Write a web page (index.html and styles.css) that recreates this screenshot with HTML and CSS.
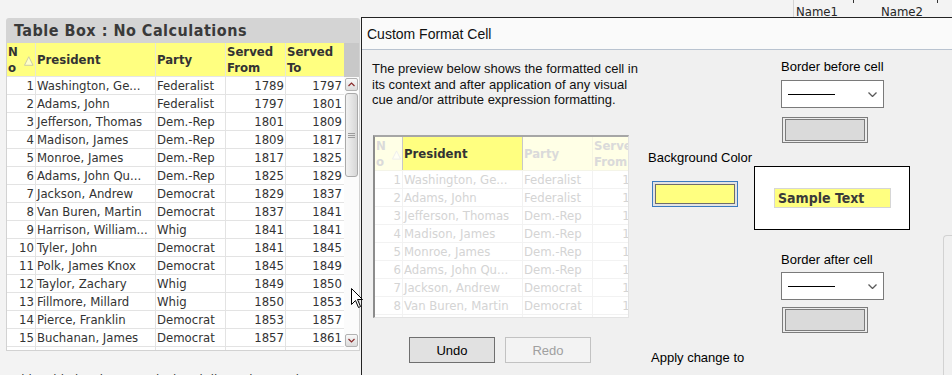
FILE: index.html
```html
<!DOCTYPE html>
<html lang="en">
<head>
    <meta charset="UTF-8">
    <meta name="viewport" content="width=device-width, initial-scale=1.0">
    <link rel="stylesheet" href="styles.css">
    <title>Custom Format Cell</title>
</head>
<body>
    <div class="top-strip">
        <div class="col-names">
            <span class="col-name first">Name1</span>
            <span class="col-name second">Name2</span>
        </div>
    </div>

    <div class="desk">
        <div class="left-side">
            <div class="table-box">
                <div class="tb-title">Table Box : No Calculations</div>
                <div class="tb-body">
                    <div class="grid">
                        <div class="row head">
                            <div class="cell no-head"><span class="no-text">No</span>
                                <svg class="sort" width="10" height="10" viewBox="0 0 10 10"><polygon points="5,0.5 9.5,9.5 0.5,9.5" fill="#ffffc8" stroke="#c9c9a8"/></svg>
                            </div>
                            <div class="cell">President</div>
                            <div class="cell">Party</div>
                            <div class="cell">Served From</div>
                            <div class="cell">Served To</div>
                        </div>
                        <div class="row"><div class="cell num">1</div><div class="cell">Washington, Ge...</div><div class="cell">Federalist</div><div class="cell num">1789</div><div class="cell num">1797</div></div>
                        <div class="row"><div class="cell num">2</div><div class="cell">Adams, John</div><div class="cell">Federalist</div><div class="cell num">1797</div><div class="cell num">1801</div></div>
                        <div class="row"><div class="cell num">3</div><div class="cell">Jefferson, Thomas</div><div class="cell">Dem.-Rep</div><div class="cell num">1801</div><div class="cell num">1809</div></div>
                        <div class="row"><div class="cell num">4</div><div class="cell">Madison, James</div><div class="cell">Dem.-Rep</div><div class="cell num">1809</div><div class="cell num">1817</div></div>
                        <div class="row"><div class="cell num">5</div><div class="cell">Monroe, James</div><div class="cell">Dem.-Rep</div><div class="cell num">1817</div><div class="cell num">1825</div></div>
                        <div class="row"><div class="cell num">6</div><div class="cell">Adams, John Qu...</div><div class="cell">Dem.-Rep</div><div class="cell num">1825</div><div class="cell num">1829</div></div>
                        <div class="row"><div class="cell num">7</div><div class="cell">Jackson, Andrew</div><div class="cell">Democrat</div><div class="cell num">1829</div><div class="cell num">1837</div></div>
                        <div class="row"><div class="cell num">8</div><div class="cell">Van Buren, Martin</div><div class="cell">Democrat</div><div class="cell num">1837</div><div class="cell num">1841</div></div>
                        <div class="row"><div class="cell num">9</div><div class="cell">Harrison, William...</div><div class="cell">Whig</div><div class="cell num">1841</div><div class="cell num">1841</div></div>
                        <div class="row"><div class="cell num">10</div><div class="cell">Tyler, John</div><div class="cell">Democrat</div><div class="cell num">1841</div><div class="cell num">1845</div></div>
                        <div class="row"><div class="cell num">11</div><div class="cell">Polk, James Knox</div><div class="cell">Democrat</div><div class="cell num">1845</div><div class="cell num">1849</div></div>
                        <div class="row"><div class="cell num">12</div><div class="cell">Taylor, Zachary</div><div class="cell">Whig</div><div class="cell num">1849</div><div class="cell num">1850</div></div>
                        <div class="row"><div class="cell num">13</div><div class="cell">Fillmore, Millard</div><div class="cell">Whig</div><div class="cell num">1850</div><div class="cell num">1853</div></div>
                        <div class="row"><div class="cell num">14</div><div class="cell">Pierce, Franklin</div><div class="cell">Democrat</div><div class="cell num">1853</div><div class="cell num">1857</div></div>
                        <div class="row"><div class="cell num">15</div><div class="cell">Buchanan, James</div><div class="cell">Democrat</div><div class="cell num">1857</div><div class="cell num">1861</div></div>
                        <div class="row empty"><div class="cell"></div><div class="cell"></div><div class="cell"></div><div class="cell"></div><div class="cell"></div></div>
                    </div>

                    <!-- scrollbar -->
                    <div class="scrollbar">
                        <div class="sb-head"></div>
                        <div class="sb-btn up">
                            <svg width="7" height="5" viewBox="0 0 7 5"><polyline points="0.5,4 3.5,1 6.5,4" fill="none" stroke="#8a2b2b" stroke-width="1.2"/></svg>
                        </div>
                        <div class="sb-thumb">
                            <svg width="7" height="5" viewBox="0 0 7 5"><path d="M0 0.5H7M0 2.5H7M0 4.5H7" stroke="#9c9c9c"/></svg>
                        </div>
                        <div class="sb-track"></div>
                        <div class="sb-btn down">
                            <svg width="7" height="5" viewBox="0 0 7 5"><polyline points="0.5,1 3.5,4 6.5,1" fill="none" stroke="#8a2b2b" stroke-width="1.2"/></svg>
                        </div>
                    </div>
                </div>
            </div>
            <p class="caption">This table box has no calculated dimensions and no expression formatting at all.</p>
        </div>

        <div class="dialog">
            <div class="dlg-title">Custom Format Cell</div>
            <div class="dlg-body">
                <div class="col-preview">
                    <p class="intro">The preview below shows the formatted cell in<br>its context and after application of any visual<br>cue and/or attribute expression formatting.</p>

                    <div class="preview">
                        <div class="row head">
                            <div class="cell no-head"><span class="no-text">No</span>
                                <svg class="sort" width="10" height="10" viewBox="0 0 10 10"><polygon points="5,0.5 9.5,9.5 0.5,9.5" fill="#fffff4" stroke="#ececec"/></svg>
                            </div>
                            <div class="cell current">President</div>
                            <div class="cell">Party</div>
                            <div class="cell">Served From</div>
                        </div>
                        <div class="row"><div class="cell num">1</div><div class="cell">Washington, Ge...</div><div class="cell">Federalist</div><div class="cell num">1789</div></div>
                        <div class="row"><div class="cell num">2</div><div class="cell">Adams, John</div><div class="cell">Federalist</div><div class="cell num">1797</div></div>
                        <div class="row"><div class="cell num">3</div><div class="cell">Jefferson, Thomas</div><div class="cell">Dem.-Rep</div><div class="cell num">1801</div></div>
                        <div class="row"><div class="cell num">4</div><div class="cell">Madison, James</div><div class="cell">Dem.-Rep</div><div class="cell num">1809</div></div>
                        <div class="row"><div class="cell num">5</div><div class="cell">Monroe, James</div><div class="cell">Dem.-Rep</div><div class="cell num">1817</div></div>
                        <div class="row"><div class="cell num">6</div><div class="cell">Adams, John Qu...</div><div class="cell">Dem.-Rep</div><div class="cell num">1825</div></div>
                        <div class="row"><div class="cell num">7</div><div class="cell">Jackson, Andrew</div><div class="cell">Democrat</div><div class="cell num">1829</div></div>
                        <div class="row"><div class="cell num">8</div><div class="cell">Van Buren, Martin</div><div class="cell">Democrat</div><div class="cell num">1837</div></div>
                        <div class="row empty"><div class="cell"></div><div class="cell"></div><div class="cell"></div><div class="cell"></div></div>
                    </div>

                    <div class="buttons">
                        <button class="btn undo">Undo</button>
                        <button class="btn redo" disabled>Redo</button>
                    </div>
                </div>

                <div class="col-color">
                    <div class="label bg-label">Background Color</div>
                    <div class="swatch"><div class="swatch-fill"></div></div>
                    <div class="label apply-label">Apply change to</div>
                </div>

                <div class="col-border">
                    <div class="label before-label">Border before cell</div>
                    <div class="select">
                        <span class="line"></span>
                        <svg width="9" height="5" viewBox="0 0 9 5"><polyline points="0.5,0.5 4.5,4.5 8.5,0.5" fill="none" stroke="#5a5a5a" stroke-width="1.3"/></svg>
                    </div>
                    <div class="border-box"><div></div></div>

                    <div class="sample"><span>Sample Text</span></div>

                    <div class="label after-label">Border after cell</div>
                    <div class="select second">
                        <span class="line"></span>
                        <svg width="9" height="5" viewBox="0 0 9 5"><polyline points="0.5,0.5 4.5,4.5 8.5,0.5" fill="none" stroke="#5a5a5a" stroke-width="1.3"/></svg>
                    </div>
                    <div class="border-box second"><div></div></div>
                </div>

                <div class="side-panel"></div>
            </div>
        </div>
    </div>

    <!-- mouse pointer over the table box edge -->
    <svg class="cursor" width="13" height="21" viewBox="0 0 13 21"><path d="M0.5 0.5V16.5L4.5 12.5L7.5 19.5L9.5 18.5L6.5 11.5H11.5Z" fill="#fff" stroke="#000" stroke-linejoin="round"/></svg>
</body>
</html>
```

FILE: styles.css
```css
* {
    box-sizing: border-box;
}

body {
    margin: 0;
    width: 952px;
    height: 375px;
    overflow: hidden;
    position: relative;
    background: #f3f3f3;
    font-family: "DejaVu Sans Condensed", "DejaVu Sans", sans-serif;
    font-size: 13px;
    color: #333;
}

/* column names of the sheet behind the dialog */
.top-strip {
    height: 17px;
}

.col-names {
    display: flex;
    height: 17px;
    margin-left: 793px;
    border-left: 1px solid #d4d4d4;
}

.col-name {
    position: relative;
    padding-top: 5px;
    line-height: 13px;
    color: #262626;
}

.col-name::after {
    content: "";
    position: absolute;
    right: 0;
    top: 0;
    width: 1px;
    height: 3px;
    background: #333;
}

.col-name.first {
    width: 60px;
    padding-left: 2px;
}

.col-name.second {
    width: 84px;
    padding-left: 27px;
}

.desk {
    display: flex;
    height: 358px;
}

/* table box */
.left-side {
    width: 361px;
    flex-shrink: 0;
    padding: 1px 0 0 6px;
}

.table-box {
    width: 354px;
}

.tb-title {
    height: 25px;
    padding-left: 8px;
    line-height: 25px;
    font-size: 16px;
    font-weight: bold;
    letter-spacing: 0.5px;
    color: #3a3a3a;
    background: #d4d4d4;
    border-radius: 3px 3px 0 0;
}

.tb-body {
    display: flex;
    height: 308px;
    overflow: hidden;
    background: #fff;
    border: 1px solid #d2d2d2;
    border-top: 0;
}

.grid {
    width: 337px;
    flex-shrink: 0;
}

.row {
    display: grid;
    grid-template-columns: 29px 120px 70px 60px 58px;
    height: 18px;
    border-bottom: 1px solid #e3e3e3;
}

.cell {
    padding: 0 1px;
    line-height: 17px;
    white-space: nowrap;
    overflow: hidden;
    border-right: 1px solid #e3e3e3;
}

.cell:last-child {
    border-right: 0;
    padding-right: 2px;
}

.cell.num {
    text-align: right;
}

.row.head {
    height: 34px;
    background: #ffff80;
    border-bottom-color: #e6e6e6;
}

.row.head .cell {
    display: flex;
    align-items: center;
    line-height: 16px;
    white-space: normal;
    font-weight: bold;
    border-right-color: #e8e8d0;
}

.row.head .no-head {
    align-items: flex-start;
    padding-top: 1px;
}

.no-text {
    width: 11px;
    word-break: break-all;
}

.sort {
    margin: 12px 0 0 6px;
}

/* scrollbar */
.scrollbar {
    width: 15px;
    display: flex;
    flex-direction: column;
    align-items: center;
    background: #fbfbfb;
}

.sb-head {
    align-self: stretch;
    height: 34px;
    background: #c8c8c8;
}

.sb-btn {
    width: 13px;
    height: 13px;
    margin-top: 1px;
    display: flex;
    align-items: center;
    justify-content: center;
    border: 1px solid #b2b2b2;
    border-radius: 2px;
    background: linear-gradient(#f8f8f8, #dcdcdc);
}

.sb-btn.down {
    margin: 0 0 3px;
}

.sb-thumb {
    width: 13px;
    height: 84px;
    margin-top: 2px;
    display: flex;
    align-items: center;
    justify-content: center;
    border: 1px solid #a9a9a9;
    border-radius: 3px;
    background: linear-gradient(to right, #f2f2f2, #d6d6d6);
}

.sb-track {
    flex: 1;
}

.caption {
    margin: 20px 0 0 8px;
    white-space: nowrap;
    line-height: 17px;
    color: #333;
}

/* dialog */
.dialog {
    flex: 1;
    background: #f0f0f0;
    border-left: 1px solid #232323;
    border-top: 1px solid #232323;
    font-family: "Liberation Sans", Arial, sans-serif;
    font-size: 13px;
    color: #000;
    overflow: hidden;
}

.dlg-title {
    height: 32px;
    padding: 2px 0 0 5px;
    line-height: 29px;
    font-size: 14px;
    color: #111;
    background: #fafafa;
    border-bottom: 1px solid #b9c3d0;
}

.dlg-body {
    display: flex;
    padding-left: 10px;
}

.col-preview {
    width: 258px;
    flex-shrink: 0;
}

.intro {
    width: 290px;
    height: 47px;
    margin: 11px 0 0;
    line-height: 15.5px;
    white-space: nowrap;
    color: #111;
}

.preview {
    width: 256px;
    height: 183px;
    margin: 27px 0 0 1px;
    overflow: hidden;
    background: #fff;
    border-style: solid;
    border-width: 2px 1px 1px 2px;
    border-color: #a6a6a6 #e3e3e3 #e3e3e3 #8c8c8c;
    font-family: "DejaVu Sans Condensed", "DejaVu Sans", sans-serif;
    color: #d4d4d4;
}

.preview .row {
    grid-template-columns: 28px 120px 70px 60px;
    border-bottom-color: #f2f2f2;
}

.preview .cell {
    border-right-color: #f2f2f2;
}

.preview .cell:last-child {
    padding-right: 1px;
}

.preview .row.head {
    background: #ffffe6;
    color: #dadada;
    border-bottom-color: #f4f4e8;
}

.preview .row.head .cell {
    border-right-color: #f4f4e0;
}

.preview .row.head .cell.current {
    background: #ffff80;
    color: #333;
    border-right-color: #c8c8c8;
    box-shadow: -1px 0 0 #c8c8c8;
}

.buttons {
    display: flex;
    gap: 10px;
    margin: 19px 0 0 37px;
}

.btn {
    width: 86px;
    height: 26px;
    padding: 0;
    font: inherit;
}

.btn.undo {
    background: #e1e1e1;
    border: 1px solid #6f6f6f;
    color: #000;
}

.btn.redo {
    background: #f3f3f3;
    border: 1px solid #c2c2c2;
    color: #a0a0a0;
}

.col-color {
    width: 106px;
    margin-left: 18px;
    flex-shrink: 0;
}

.label {
    line-height: 15px;
    white-space: nowrap;
}

.bg-label {
    margin-top: 100px;
}

.swatch {
    width: 86px;
    height: 26px;
    margin: 16px 0 0 4px;
    padding: 2px;
    border: 1px solid #3b7bbf;
    background: #e3e3e3;
}

.swatch-fill {
    height: 100%;
    border: 1px solid #6d6d6d;
    background: #ffff80;
}

.apply-label {
    margin: 143px 0 0 3px;
}

.col-border {
    width: 156px;
    flex-shrink: 0;
}

.col-border .label {
    margin-left: 27px;
}

.before-label {
    margin-top: 9px;
}

.select {
    width: 103px;
    height: 28px;
    margin: 6px 0 0 27px;
    padding: 0 6px;
    display: flex;
    align-items: center;
    justify-content: space-between;
    background: #fff;
    border: 1px solid #7a7a7a;
}

.select.second {
    margin-top: 5px;
}

.select .line {
    width: 47px;
    height: 1px;
    background: #000;
}

.border-box {
    width: 86px;
    height: 26px;
    margin: 9px 0 0 28px;
    padding: 1px 2px;
    border: 1px solid #7c7c7c;
    background: #ececec;
}

.border-box.second {
    margin-top: 7px;
}

.border-box div {
    height: 100%;
    border: 1px solid #7c7c7c;
    background: #dadada;
}

.sample {
    width: 156px;
    height: 64px;
    margin-top: 23px;
    padding: 21px 0 0 19px;
    background: #fff;
    border: 1px solid #000;
}

.sample span {
    display: block;
    width: 117px;
    height: 20px;
    padding-left: 3px;
    line-height: 18px;
    font-family: "DejaVu Sans Condensed", "DejaVu Sans", sans-serif;
    font-size: 14px;
    font-weight: bold;
    color: #3a3a3a;
    background: #ffff80;
    border: 1px solid #d6d6d6;
}

.after-label {
    margin-top: 22px;
}

.side-panel {
    flex: 1;
    height: 200px;
    margin: 185px 0 0 33px;
    border-left: 1px solid #d2d2d2;
    border-top: 1px solid #d2d2d2;
    border-top-left-radius: 4px;
}

.cursor {
    position: absolute;
    left: 351px;
    top: 288px;
}
```
